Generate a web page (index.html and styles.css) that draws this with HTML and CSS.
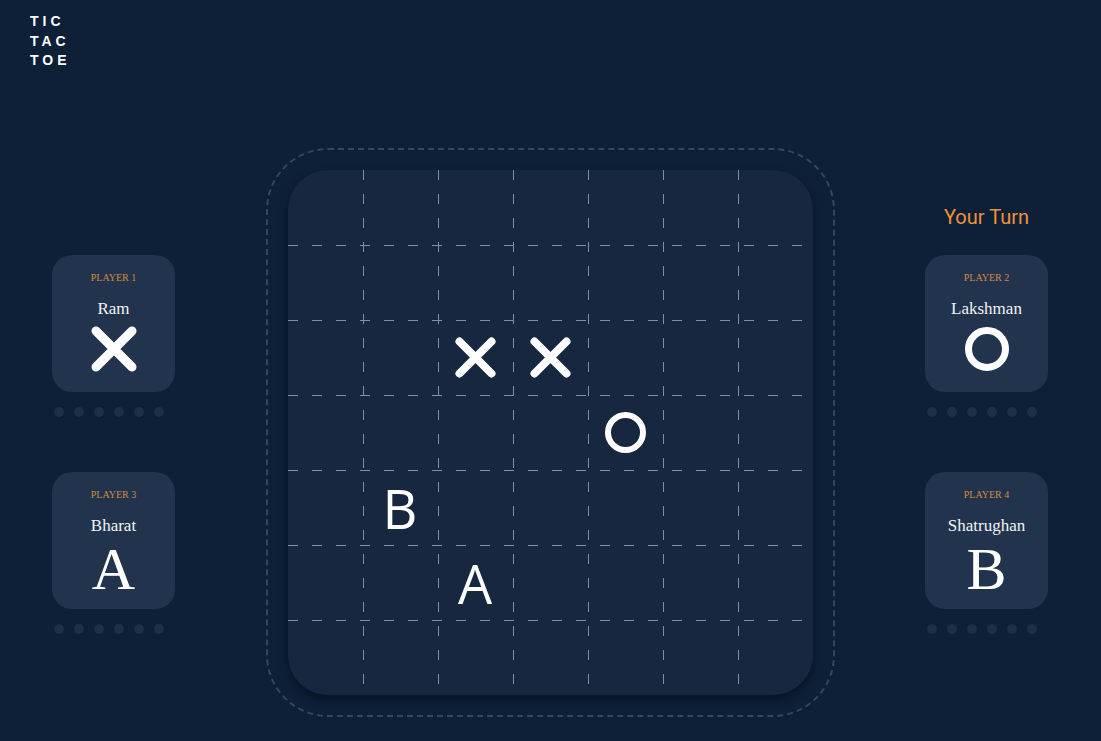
FILE: index.html
```html
<!DOCTYPE html>
<html lang="en">
<head>
<meta charset="utf-8">
<title>Tic Tac Toe</title>
<link rel="stylesheet" href="styles.css">
</head>
<body>
<div class="app">
  <header class="logo">
    <span>TIC</span>
    <span>TAC</span>
    <span>TOE</span>
  </header>
  <main class="arena">
    <section class="side">
      <div class="player">
        <div class="card">
          <div class="label">PLAYER 1</div>
          <div class="name">Ram</div>
          <div class="mark">
            <svg class="icon" width="46" height="46" viewBox="0 0 46 46"><path d="M5 5L41 41M41 5L5 41" stroke="#fff" stroke-width="9" stroke-linecap="round"/></svg>
          </div>
        </div>
        <div class="dots"><i></i><i></i><i></i><i></i><i></i><i></i></div>
      </div>
      <div class="player">
        <div class="card">
          <div class="label">PLAYER 3</div>
          <div class="name">Bharat</div>
          <div class="mark letter">A</div>
        </div>
        <div class="dots"><i></i><i></i><i></i><i></i><i></i><i></i></div>
      </div>
    </section>

    <div class="frame">
      <div class="board">
        <svg class="grid" width="525" height="525" viewBox="0 0 525 525">
          <g stroke="#8190aa" stroke-width="1" stroke-dasharray="10 14">
            <line x1="75.5" y1="0" x2="75.5" y2="525"/>
            <line x1="150.5" y1="0" x2="150.5" y2="525"/>
            <line x1="225.5" y1="0" x2="225.5" y2="525"/>
            <line x1="300.5" y1="0" x2="300.5" y2="525"/>
            <line x1="375.5" y1="0" x2="375.5" y2="525"/>
            <line x1="450.5" y1="0" x2="450.5" y2="525"/>
            <line x1="0" y1="75.5" x2="525" y2="75.5"/>
            <line x1="0" y1="150.5" x2="525" y2="150.5"/>
            <line x1="0" y1="225.5" x2="525" y2="225.5"/>
            <line x1="0" y1="300.5" x2="525" y2="300.5"/>
            <line x1="0" y1="375.5" x2="525" y2="375.5"/>
            <line x1="0" y1="450.5" x2="525" y2="450.5"/>
          </g>
        </svg>
        <div class="cells">
          <div class="cell"></div><div class="cell"></div><div class="cell"></div><div class="cell"></div><div class="cell"></div><div class="cell"></div><div class="cell"></div>
          <div class="cell"></div><div class="cell"></div><div class="cell"></div><div class="cell"></div><div class="cell"></div><div class="cell"></div><div class="cell"></div>
          <div class="cell"></div><div class="cell"></div>
          <div class="cell"><svg width="41" height="41" viewBox="0 0 41 41"><path d="M4.5 4.5L36.5 36.5M36.5 4.5L4.5 36.5" stroke="#fff" stroke-width="8" stroke-linecap="round"/></svg></div>
          <div class="cell"><svg width="41" height="41" viewBox="0 0 41 41"><path d="M4.5 4.5L36.5 36.5M36.5 4.5L4.5 36.5" stroke="#fff" stroke-width="8" stroke-linecap="round"/></svg></div>
          <div class="cell"></div><div class="cell"></div><div class="cell"></div>
          <div class="cell"></div><div class="cell"></div><div class="cell"></div><div class="cell"></div>
          <div class="cell"><svg width="41" height="41" viewBox="0 0 41 41"><circle cx="20.5" cy="20.5" r="17.5" fill="none" stroke="#fff" stroke-width="6"/></svg></div>
          <div class="cell"></div><div class="cell"></div>
          <div class="cell"></div>
          <div class="cell board-letter">B</div>
          <div class="cell"></div><div class="cell"></div><div class="cell"></div><div class="cell"></div><div class="cell"></div>
          <div class="cell"></div><div class="cell"></div>
          <div class="cell board-letter">A</div>
          <div class="cell"></div><div class="cell"></div><div class="cell"></div><div class="cell"></div>
          <div class="cell"></div><div class="cell"></div><div class="cell"></div><div class="cell"></div><div class="cell"></div><div class="cell"></div><div class="cell"></div>
        </div>
      </div>
    </div>

    <section class="side side-right">
      <div class="turn">Your Turn</div>
      <div class="player">
        <div class="card">
          <div class="label">PLAYER 2</div>
          <div class="name">Lakshman</div>
          <div class="mark">
            <svg class="icon" width="46" height="46" viewBox="0 0 46 46"><circle cx="23" cy="23" r="18.5" fill="none" stroke="#fff" stroke-width="7"/></svg>
          </div>
        </div>
        <div class="dots"><i></i><i></i><i></i><i></i><i></i><i></i></div>
      </div>
      <div class="player">
        <div class="card">
          <div class="label">PLAYER 4</div>
          <div class="name">Shatrughan</div>
          <div class="mark letter">B</div>
        </div>
        <div class="dots"><i></i><i></i><i></i><i></i><i></i><i></i></div>
      </div>
    </section>
  </main>
</div>
</body>
</html>
```

FILE: styles.css
```css
* { box-sizing: border-box; }

html, body {
  margin: 0;
  padding: 0;
  background: #0e1f38;
  height: 100%;
  overflow: hidden;
}

.app {
  width: 1101px;
  height: 741px;
  display: flex;
  flex-direction: column;
  font-family: "Liberation Serif", "Times New Roman", serif;
  color: #eef1f5;
}

.logo {
  display: flex;
  flex-direction: column;
  padding: 12px 0 0 30px;
  height: 70px;
  font-family: "Liberation Sans", Arial, sans-serif;
  font-weight: 700;
  font-size: 14px;
  line-height: 19.5px;
  letter-spacing: 4px;
  color: #ffffff;
}

.arena {
  display: flex;
  justify-content: space-between;
  align-items: flex-start;
  padding: 0 53px 0 52px;
  margin-top: 78px;
}

.side {
  width: 123px;
  display: flex;
  flex-direction: column;
  gap: 55px;
  padding-top: 107px;
}

.side-right {
  padding-top: 57px;
  gap: 0;
}

.side-right .player + .player {
  margin-top: 55px;
}

.turn {
  height: 24px;
  margin-bottom: 26px;
  text-align: center;
  font-family: Roboto, "Liberation Sans", sans-serif;
  font-size: 20px;
  line-height: 24px;
  color: #ef9239;
  white-space: nowrap;
}

.player {
  display: flex;
  flex-direction: column;
}

.card {
  width: 123px;
  height: 137px;
  border-radius: 20px;
  background: #22344d;
  display: flex;
  flex-direction: column;
  align-items: center;
  padding-top: 17px;
}

.label {
  font-size: 10px;
  line-height: 12px;
  color: #d08a3f;
}

.name {
  margin-top: 15px;
  font-size: 17px;
  line-height: 20px;
  color: #f1f3f6;
  white-space: nowrap;
}

.mark {
  margin-top: 7px;
  height: 46px;
  display: flex;
  justify-content: center;
  align-items: center;
}

.icon { display: block; }

.letter {
  margin-top: 10px;
  font-size: 60px;
  line-height: 46px;
  color: #ffffff;
  align-items: flex-end;
}

.dots {
  display: flex;
  gap: 10px;
  margin-top: 15px;
  padding-left: 2px;
}

.dots i {
  width: 10px;
  height: 10px;
  border-radius: 50%;
  background: #1e2f49;
}

.frame {
  width: 569px;
  height: 569px;
  border: 2px dashed #34455e;
  border-radius: 62px;
  padding: 20px;
}

.board {
  position: relative;
  width: 525px;
  height: 525px;
  border-radius: 40px;
  background: #16273f;
  box-shadow: 0 5px 10px rgba(0, 0, 0, 0.35);
  overflow: hidden;
}

.grid {
  position: absolute;
  inset: 0;
  display: block;
}

.cells {
  position: relative;
  display: grid;
  grid-template-columns: repeat(7, 75px);
  grid-template-rows: repeat(7, 75px);
}

.cell {
  display: flex;
  align-items: center;
  justify-content: center;
}

.cell svg { display: block; }

.board-letter {
  font-family: "Open Sans", "Noto Sans", sans-serif;
  font-size: 54px;
  line-height: 1;
  color: #ffffff;
}
```
